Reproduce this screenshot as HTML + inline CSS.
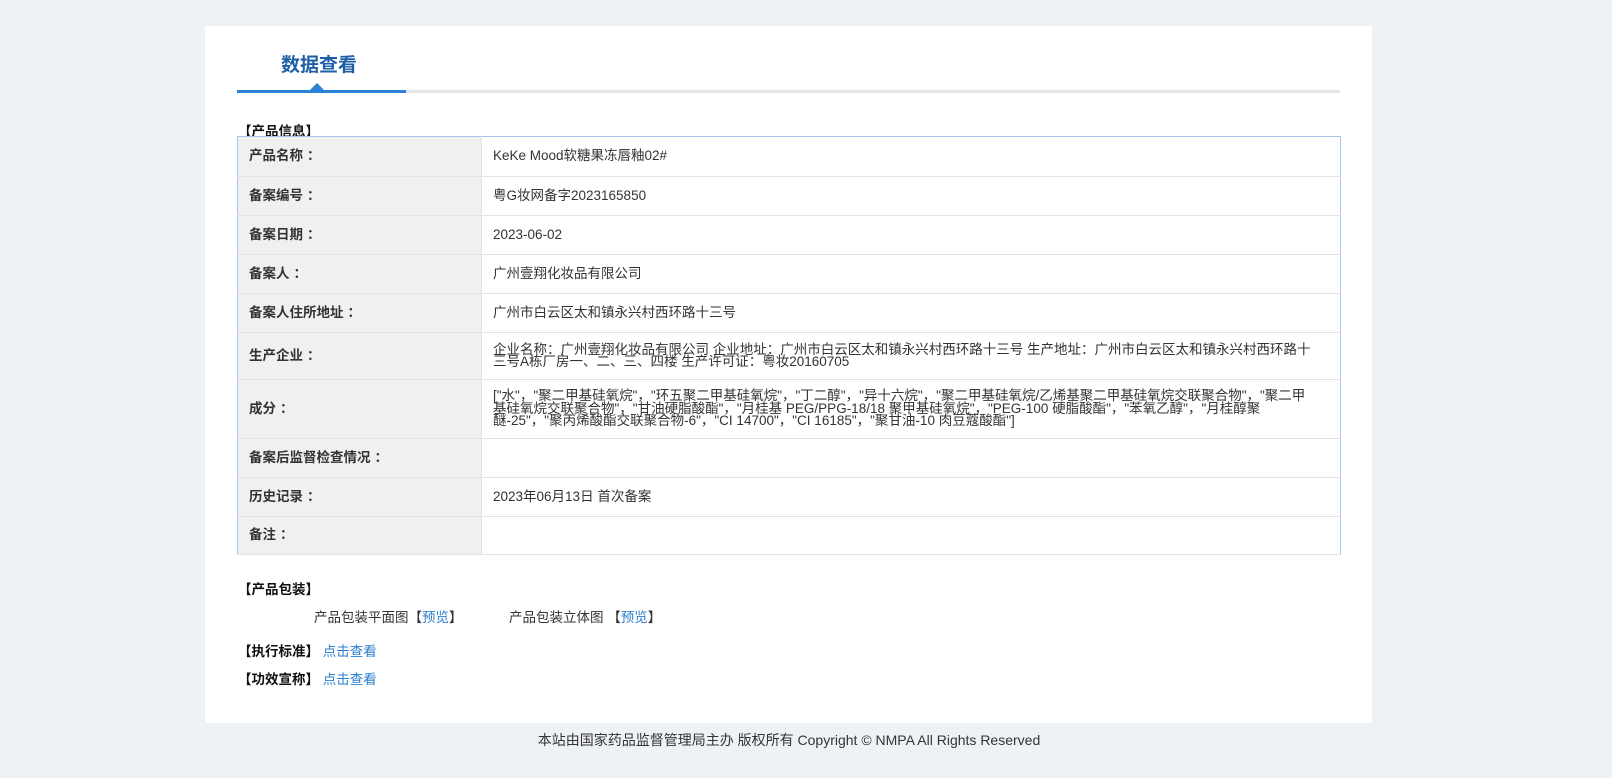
<!DOCTYPE html>
<html><head><meta charset="utf-8"><style>
body{margin:0;background:#eff2f5;font-family:"Liberation Sans","Noto Sans CJK SC",sans-serif;font-size:13px;color:#333;width:1612px;height:778px;position:relative;overflow:hidden}
.panel{position:absolute;left:205px;top:26px;width:1167px;height:697px;background:#fff}
.title{position:absolute;left:76px;top:24px;font-size:19px;font-weight:bold;color:#1d5fa6}
.line{position:absolute;left:32px;top:64px;width:1103px;height:3px;background:#e6e6e6}
.line i{position:absolute;left:0;top:0;width:169px;height:3px;background:#2a83d4}
.tri{position:absolute;left:105px;top:57px;width:0;height:0;border-left:7px solid transparent;border-right:7px solid transparent;border-bottom:7px solid #2a83d4}
.h{position:absolute;font-weight:bold;color:#111;font-size:13.5px}
table{position:absolute;left:32px;top:110px;width:1104px;border-collapse:collapse;border:1px solid #a8c4ea}
td{border-bottom:1px solid #e3e3e3;padding:0 0 0 11px;font-size:13.5px;line-height:12.5px}
td.l{width:232px;background:#f0f0f0;font-weight:bold;color:#333;border-right:1px solid #e3e3e3}
td.l span{margin-left:4px}
a{color:#2b7fd1;text-decoration:none}
.foot{position:absolute;top:730px;left:0;width:1578px;text-align:center;font-size:14px;color:#333}
</style></head><body>
<div class="panel">
<div class="title">数据查看</div>
<div class="line"><i></i></div><div class="tri"></div>
<div class="h" style="left:33px;top:94px">【产品信息】</div>
<table>
<tr style="height:40px"><td class="l">产品名称<span>：</span></td><td>KeKe Mood软糖果冻唇釉02#</td></tr>
<tr style="height:39px"><td class="l">备案编号<span>：</span></td><td>粤G妆网备字2023165850</td></tr>
<tr style="height:39px"><td class="l">备案日期<span>：</span></td><td>2023-06-02</td></tr>
<tr style="height:39px"><td class="l">备案人<span>：</span></td><td>广州壹翔化妆品有限公司</td></tr>
<tr style="height:39px"><td class="l">备案人住所地址<span>：</span></td><td>广州市白云区太和镇永兴村西环路十三号</td></tr>
<tr style="height:47px"><td class="l">生产企业<span>：</span></td><td>企业名称：广州壹翔化妆品有限公司 企业地址：广州市白云区太和镇永兴村西环路十三号 生产地址：广州市白云区太和镇永兴村西环路十<br>三号A栋厂房一、二、三、四楼 生产许可证：粤妆20160705</td></tr>
<tr style="height:59px"><td class="l">成分<span>：</span></td><td>["水"，"聚二甲基硅氧烷"，"环五聚二甲基硅氧烷"，"丁二醇"，"异十六烷"，"聚二甲基硅氧烷/乙烯基聚二甲基硅氧烷交联聚合物"，"聚二甲<br>基硅氧烷交联聚合物"，"甘油硬脂酸酯"，"月桂基 PEG/PPG-18/18 聚甲基硅氧烷"，"PEG-100 硬脂酸酯"，"苯氧乙醇"，"月桂醇聚<br>醚-25"，"聚丙烯酸酯交联聚合物-6"，"CI 14700"，"CI 16185"，"聚甘油-10 肉豆蔻酸酯"]</td></tr>
<tr style="height:39px"><td class="l">备案后监督检查情况<span>：</span></td><td></td></tr>
<tr style="height:39px"><td class="l">历史记录<span>：</span></td><td>2023年06月13日 首次备案</td></tr>
<tr style="height:38px"><td class="l">备注<span>：</span></td><td></td></tr>
</table>
<div class="h" style="left:33px;top:552px">【产品包装】</div>
<div style="position:absolute;left:109px;top:580px;font-size:13.5px">产品包装平面图【<a>预览</a>】</div>
<div style="position:absolute;left:304px;top:580px;font-size:13.5px">产品包装立体图 【<a>预览</a>】</div>
<div class="h" style="left:33px;top:614px">【执行标准】 <a style="font-weight:normal">点击查看</a></div>
<div class="h" style="left:33px;top:642px">【功效宣称】 <a style="font-weight:normal">点击查看</a></div>
</div>
<div class="foot">本站由国家药品监督管理局主办 版权所有 Copyright © NMPA All Rights Reserved</div>
</body></html>
